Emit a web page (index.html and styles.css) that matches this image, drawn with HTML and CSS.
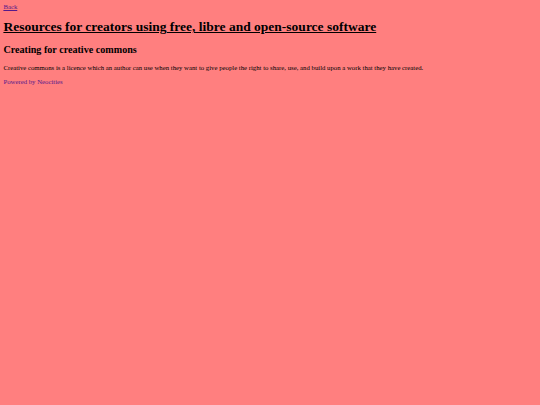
FILE: index.html
```html
<!DOCTYPE html>
<html>
<head>
<meta charset="utf-8">
<title>Resources</title>
<link rel="stylesheet" href="styles.css">
</head>
<body class="page">
<a class="link" href="#">Back</a>
<h1 class="title"><u>Resources for creators using free, libre and open-source software</u></h1>
<h2 class="subtitle">Creating for creative commons</h2>
<p class="text">Creative commons is a licence which an author can use when they want to give people the right to share, use, and build upon a work that they have created.</p>
<a class="link" href="#">Powered by Neocities</a>
</body>
</html>
```
FILE: styles.css
```css
html { background: #ff7f7f; }
.page {
  margin: 3.4px;
  font-family: "Liberation Serif", "Times New Roman", serif;
  font-size: 6.75px;
  color: #000;
  background: #ff7f7f;
}
.link { color: #551a8b; }
.title { font-size: 2em; margin: 0.67em 0; }
.subtitle { font-size: 1.5em; margin: 0.83em 0; }
.text { margin: 1em 0; }
```
